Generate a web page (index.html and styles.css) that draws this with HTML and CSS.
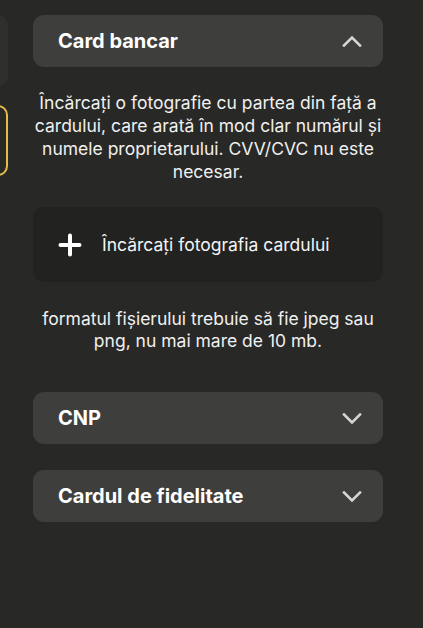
FILE: index.html
```html
<!DOCTYPE html>
<html lang="ro">
<head>
<meta charset="utf-8">
<link rel="stylesheet" href="styles.css">
</head>
<body>
<div class="layout">
  <aside class="side">
    <div class="side-card"></div>
    <div class="side-card side-card--active"></div>
  </aside>
  <main class="main">
    <section class="acc">
      <div class="acc-head">
        <span class="acc-title">Card bancar</span>
        <svg class="chev" width="20" height="12" viewBox="0 0 20 12"><path d="M2 10.5 L10 2.5 L18 10.5" fill="none" stroke="#d4d4d4" stroke-width="2.6" stroke-linecap="square"/></svg>
      </div>
      <div class="acc-body">
        <p class="desc">Încărcați o fotografie cu partea din față a cardului, care arată în mod clar numărul și numele proprietarului. CVV/CVC nu este necesar.</p>
        <div class="upload">
          <svg class="plus" width="24" height="24" viewBox="0 0 24 24"><path d="M12 2.5 V21.5 M2.5 12 H21.5" stroke="#fff" stroke-width="4" stroke-linecap="round"/></svg>
          <span>Încărcați fotografia cardului</span>
        </div>
        <p class="note">formatul fișierului trebuie să fie jpeg sau png, nu mai mare de 10 mb.</p>
      </div>
    </section>
    <section class="acc acc--closed">
      <div class="acc-head">
        <span class="acc-title">CNP</span>
        <svg class="chev" width="20" height="12" viewBox="0 0 20 12"><path d="M2 2.5 L10 10.5 L18 2.5" fill="none" stroke="#d4d4d4" stroke-width="2.6" stroke-linecap="square"/></svg>
      </div>
    </section>
    <section class="acc acc--closed">
      <div class="acc-head">
        <span class="acc-title">Cardul de fidelitate</span>
        <svg class="chev" width="20" height="12" viewBox="0 0 20 12"><path d="M2 2.5 L10 10.5 L18 2.5" fill="none" stroke="#d4d4d4" stroke-width="2.6" stroke-linecap="square"/></svg>
      </div>
    </section>
  </main>
</div>
</body>
</html>
```
FILE: styles.css
```css
html, body {
  margin: 0;
  padding: 0;
  background: #282826;
  height: 100%;
}
body {
  font-family: Inter, "Noto Sans", sans-serif;
  color: #f2f2f2;
}
.layout {
  display: flex;
  gap: 25px;
  padding-top: 15px;
}
.side {
  width: 8px;
  overflow: hidden;
  display: flex;
  flex-direction: column;
  align-items: flex-end;
  gap: 19px;
  flex-shrink: 0;
}
.side-card {
  width: 120px;
  height: 71px;
  flex-shrink: 0;
  border-radius: 10px;
  background: #2f2f2e;
  box-sizing: border-box;
}
.side-card--active {
  background: transparent;
  border: 2px solid #e2bb4c;
}
.main {
  width: 350px;
  display: flex;
  flex-direction: column;
  gap: 26px;
}
.acc-head {
  height: 52px;
  box-sizing: border-box;
  display: flex;
  align-items: center;
  justify-content: space-between;
  padding: 0 21px 0 25px;
  background: #3e3e3d;
  border-radius: 11px;
}
.acc-title {
  font-size: 20px;
  font-weight: 700;
  color: #ffffff;
}
.chev {
  display: block;
}
.acc-body {
  padding-top: 24px;
  padding-bottom: 14px;
}
.desc, .note {
  margin: 0;
  font-size: 17.5px;
  line-height: 23px;
  text-align: center;
  color: #f0f0f0;
}
.upload {
  margin-top: 24px;
  height: 75px;
  box-sizing: border-box;
  display: flex;
  align-items: center;
  gap: 20px;
  padding-left: 25px;
  background: #222221;
  border-radius: 11px;
  font-size: 17.5px;
  color: #f4f4f4;
}
.plus {
  display: block;
}
.note {
  margin-top: 26px;
  line-height: 22px;
  padding: 0 6px;
}
```
